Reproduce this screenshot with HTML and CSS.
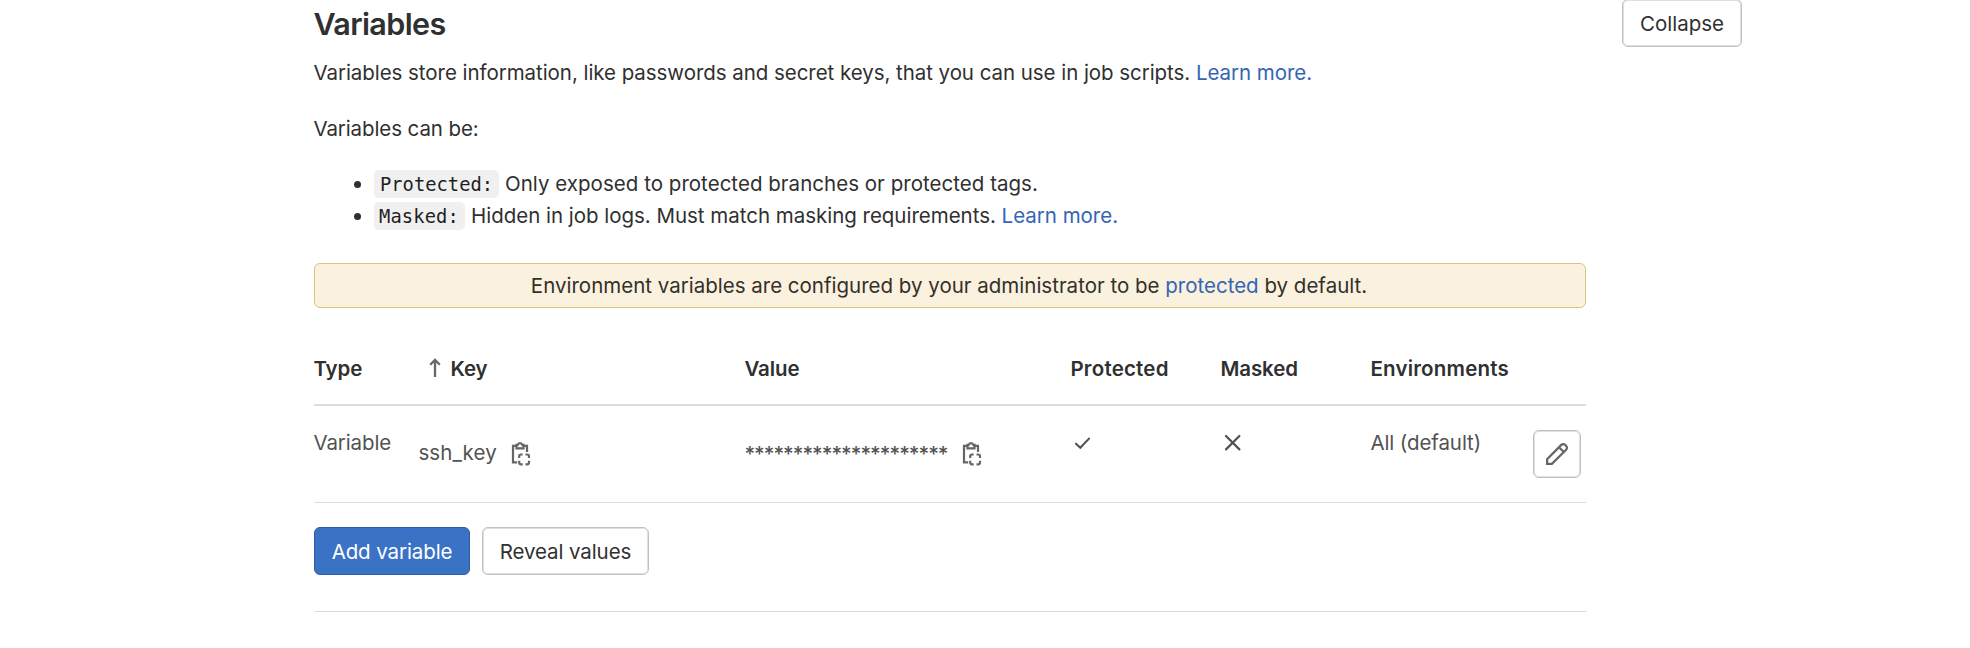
FILE: index.html
```html
<!DOCTYPE html>
<html lang="en">
<head>
<meta charset="utf-8">
<title>Variables</title>
<link rel="stylesheet" href="styles.css">
</head>
<body>
<svg width="0" height="0" class="sprite" aria-hidden="true">
  <symbol id="clipboard" viewBox="0 0 24 25"><g fill="none" stroke="currentColor" stroke-width="2.2"><path d="M8.2 21.3H4V4.8h3.5M14.6 4.8H18v6.2"/><path d="M7.5 3.8v3.6h7V3.8h-1.2a2.4 2.4 0 0 0-4.6 0z"/><path d="M10.2 17v-1.8q0-1.7 1.7-1.7h1.8M16.500 13.500h1.800q1.700 0 1.700 1.700V17M20 19.800v1.800q0 1.700-1.700 1.700h-1.800M13.700 23.300h-1.800q-1.700 0-1.700-1.700v-1.800"/></g></symbol>
  <symbol id="pencil" viewBox="0 0 24 24"><path d="M2.1 21.9v-4.8L16.3 2.9a2.8 2.8 0 0 1 4 0l.8.8a2.8 2.8 0 0 1 0 4L6.9 21.9zM14 5.2l4.8 4.8" fill="none" stroke="currentColor" stroke-width="2.2"/></symbol>
</svg>
<main class="settings">
  <header class="heading">
    <h1 class="title">Variables</h1>
    <button class="btn btn-collapse">Collapse</button>
  </header>
  <div class="content">
    <p class="intro">Variables store information, like passwords and secret keys, that you can use in job scripts. <a href="#">Learn more.</a></p>
    <p class="can-be">Variables can be:</p>
    <ul class="kinds">
      <li class="kind-protected"><code class="code-protected">Protected:</code><span>Only exposed to protected branches or protected tags.</span></li>
      <li class="kind-masked"><code class="code-masked">Masked:</code><span>Hidden in job logs. Must match masking requirements. <a href="#">Learn more.</a></span></li>
    </ul>
    <div class="alert">Environment variables are configured by your administrator to be <a href="#">protected</a> by default.</div>
    <div class="row head">
      <span>Type</span>
      <span class="sort"><svg class="arrow" viewBox="0 0 12 20"><path d="M6 19V2M1.2 6.8 6 2l4.8 4.8" fill="none" stroke="currentColor" stroke-width="2.3"/></svg>Key</span>
      <span>Value</span><span class="wide">Protected</span><span>Masked</span><span class="wide">Environments</span><span></span>
    </div>
    <div class="row data">
      <span>Variable</span>
      <span class="copy"><span class="key">ssh_key</span><svg class="icon"><use href="#clipboard"/></svg></span>
      <span class="copy"><span class="stars">*********************</span><svg class="icon"><use href="#clipboard"/></svg></span>
      <span class="mark"><svg class="glyph" viewBox="0 0 24 24"><path d="m5 12.7 4.3 4.1L18 7.6" fill="none" stroke="currentColor" stroke-width="2.1" stroke-linecap="round"/></svg></span>
      <span class="mark"><svg class="glyph" viewBox="0 0 24 24"><path d="m5 5 13.4 13.4M18.4 5 5 18.4" fill="none" stroke="currentColor" stroke-width="2.2" stroke-linecap="round"/></svg></span>
      <span>All (default)</span>
      <button class="btn btn-edit" aria-label="Edit"><svg class="icon"><use href="#pencil"/></svg></button>
    </div>
    <div class="actions">
      <button class="btn btn-add">Add variable</button>
      <button class="btn btn-reveal">Reveal values</button>
    </div>
  </div>
</main>
</body>
</html>
```
FILE: styles.css
```css
* { box-sizing: border-box; }
body {
  margin: 0;
  background: #fff;
  color: #303030;
  font: 400 20.5px/32px Inter, "Liberation Sans", sans-serif;
  letter-spacing: -0.05px;
  white-space: nowrap;
}
.sprite { display: block; height: 0; }
a { color: #3465b5; text-decoration: none; }
.settings { height: 648px; overflow: hidden; }
.heading {
  display: flex;
  justify-content: space-between;
  align-items: flex-start;
  width: 1428px;
  height: 57px;
  margin-left: 314px;
}
.title { margin: 4px 0 0; font-size: 30.5px; line-height: 40px; font-weight: 600; letter-spacing: -0.6px; text-indent: -0.6px; }
.content { width: 1272px; margin-left: 314px; }
.intro, .can-be { margin: 0 0 24px; text-indent: -0.6px; }
.can-be { margin-bottom: 23px; letter-spacing: -0.1px; }
.kinds { list-style: none; margin: 0; padding: 0 0 0 40px; }
.kinds li { display: flex; align-items: center; height: 32px; }
.kinds li::before { content: ""; width: 7px; height: 7px; margin-right: 13px; border-radius: 50%; background: #303030; }
.kinds .kind-protected { letter-spacing: 0.03px; }
.kinds .kind-masked { letter-spacing: -0.02px; }
code {
  height: 28px;
  margin-right: 6px;
  padding-left: 6px;
  border-radius: 5px;
  background: #f0f0f0;
  color: #1f1f1f;
  font: 18.8px/29px "DejaVu Sans Mono", monospace;
}
.code-protected { width: 125px; letter-spacing: 0; }
.code-masked { width: 91px; padding-left: 5px; letter-spacing: 0.1px; }
.alert {
  height: 45px;
  margin-top: 31px;
  padding-right: 2px;
  border: 1px solid #dbc382;
  border-radius: 6px;
  background: #faf1df;
  color: #333029;
  line-height: 43px;
  letter-spacing: 0;
  text-align: center;
}
.row { display: grid; grid-template-columns: 105px 326px 326px 150px 150px 162px 53px; letter-spacing: -0.1px; text-indent: -0.6px; }
.head {
  height: 98px;
  padding-top: 45px;
  border-bottom: 2px solid #dcdcdc;
  font-weight: 600;
}
.wide { letter-spacing: 0.2px; }
.sort { display: flex; padding-left: 10px; }
.arrow { width: 12px; height: 20px; margin: 5px 10px 0 0; color: #666; }
.data { height: 97px; padding-top: 21px; border-bottom: 1px solid #dcdcdc; color: #525252; }
.copy { display: flex; align-items: flex-start; padding-top: 10px; }
.icon { width: 24px; height: 24px; color: #666; }
.copy .icon { height: 25px; margin-top: 4px; }
.key { width: 90px; letter-spacing: 0.1px; }
.stars { width: 215px; padding-top: 1px; font-weight: 500; letter-spacing: -1px; }
.mark { padding-top: 4px; }
.glyph { display: block; width: 24px; height: 24px; margin-left: -0.5px; }
.btn {
  height: 48px;
  padding: 1px 0 0;
  border: 1px solid #c0c0c0;
  border-radius: 6px;
  box-shadow: inset 0 0 0 1px #e0e0e0;
  background: #fff;
  color: #303030;
  font: inherit;
  letter-spacing: -0.1px;
}
.btn-collapse { width: 120px; margin-top: -1px; letter-spacing: 0; }
.btn-edit { display: flex; align-items: center; justify-content: center; width: 48px; margin-top: 3px; padding: 0; }
.actions { display: flex; gap: 12px; height: 109px; padding-top: 24px; border-bottom: 1px solid #dcdcdc; }
.btn-add { width: 156px; border-color: #2f5ca0; box-shadow: none; background: #3a72c5; color: #fff; }
.btn-reveal { width: 167px; }
```
